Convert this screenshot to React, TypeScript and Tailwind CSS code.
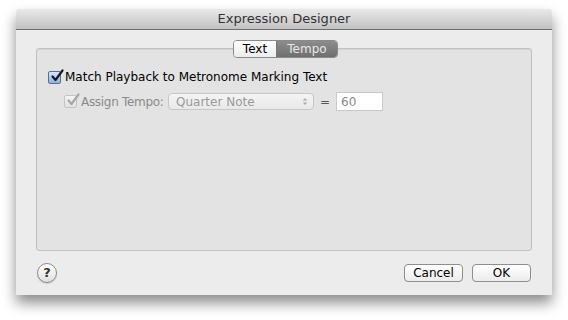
import React from 'react';

const font = { fontFamily: '"DejaVu Sans", "Liberation Sans", sans-serif' };

function Check({ disabled }: { disabled?: boolean }) {
  return (
    <span
      className={
        'relative inline-flex h-[13px] w-[13px] shrink-0 items-center justify-center rounded-[2px] border ' +
        (disabled
          ? 'border-[#c4c4c4] bg-gradient-to-b from-[#f4f4f4] to-[#e2e2e2]'
          : 'border-[#5a6f8c] bg-gradient-to-b from-[#d9e7f7] to-[#8fb1dc]')
      }
    >
      <svg viewBox="0 0 14 14" className="absolute -top-[3px] left-[1px] h-[14px] w-[14px]">
        <path
          d="M2.5 7.5 L5.5 11 L12.5 1.5"
          fill="none"
          stroke={disabled ? '#a8a8a8' : '#111a2e'}
          strokeWidth="2.2"
          strokeLinecap="round"
          strokeLinejoin="round"
        />
      </svg>
    </span>
  );
}

export default function App() {
  return (
    <div className="h-[320px] w-[568px] bg-white pl-4 pt-[9px]" style={font}>
      <div className="flex h-[286px] w-[536px] flex-col overflow-hidden rounded-t-[4px] bg-[#ececec] shadow-[0_8px_14px_rgba(0,0,0,0.45)]">
        <div className="flex h-[21px] items-center justify-center border-b border-[#6f6f6f] bg-gradient-to-b from-[#e9e9e9] to-[#c2c2c2] text-[13px] text-[#333]">
          Expression Designer
        </div>
        <div className="relative mx-5 mt-[18px] h-[203px] rounded-[3px] border border-[#c2c2c2] bg-[#e3e3e3] shadow-[inset_0_1px_1px_rgba(0,0,0,0.08)]">
          <div className="absolute -top-[9px] left-[196px] flex h-[18px] overflow-hidden rounded-[4px] border border-[#8a8a8a] text-[12px]">
            <div className="flex w-[42px] items-center justify-center bg-gradient-to-b from-white to-[#ececec] text-black">
              Text
            </div>
            <div className="flex w-[61px] items-center justify-center border-l border-[#777] bg-gradient-to-b from-[#8d8d8d] to-[#6f6f6f] text-[#e8e8e8]">
              Tempo
            </div>
          </div>
          <div className="flex flex-col gap-[7px] pl-[11px] pt-[20px]">
            <div className="flex h-[16px] items-center gap-[4px] text-[12px] leading-[16px] text-black">
              <Check />
              <span>Match Playback to Metronome Marking Text</span>
            </div>
            <div className="flex h-[19px] items-center pl-[16px] text-[12px] text-[#8a8a8a]">
              <Check disabled />
              <span className="ml-[4px] w-[84px] tracking-[-0.3px]">Assign Tempo:</span>
              <div className="ml-[3px] flex h-[17px] w-[146px] items-center justify-between rounded-[4px] border border-[#c7c7c7] bg-gradient-to-b from-[#f4f4f4] to-[#e9e9e9] pl-[7px] pr-[5px] text-[12px] text-[#9a9a9a]">
                <span>Quarter Note</span>
                <svg viewBox="0 0 6 10" className="h-[9px] w-[6px]">
                  <path d="M0.5 4 L3 1 L5.5 4 Z M0.5 6 L3 9 L5.5 6 Z" fill="#a9a9a9" />
                </svg>
              </div>
              <span className="ml-[6px] text-[#555]">=</span>
              <div className="ml-[6px] flex h-[19px] w-[47px] items-center border border-[#c9c9c9] bg-white pl-[4px] text-[12px] text-[#8a8a8a]">
                60
              </div>
            </div>
          </div>
        </div>
        <div className="mx-[21px] mt-[12px] flex items-center justify-between">
          <div className="flex h-[20px] w-[20px] items-center justify-center rounded-full border border-[#8a8a8a] bg-gradient-to-b from-white to-[#e0e0e0] text-[13px] font-bold text-[#333] shadow-[0_1px_1px_rgba(0,0,0,0.15)]">
            ?
          </div>
          <div className="flex gap-[9px]">
            <div className="flex h-[18px] w-[59px] items-center justify-center rounded-[4px] border border-[#8e8e8e] bg-gradient-to-b from-white to-[#ececec] text-[12px] text-black">
              Cancel
            </div>
            <div className="flex h-[18px] w-[59px] items-center justify-center rounded-[4px] border border-[#8e8e8e] bg-gradient-to-b from-white to-[#ececec] text-[12px] text-black">
              OK
            </div>
          </div>
        </div>
      </div>
    </div>
  );
}
